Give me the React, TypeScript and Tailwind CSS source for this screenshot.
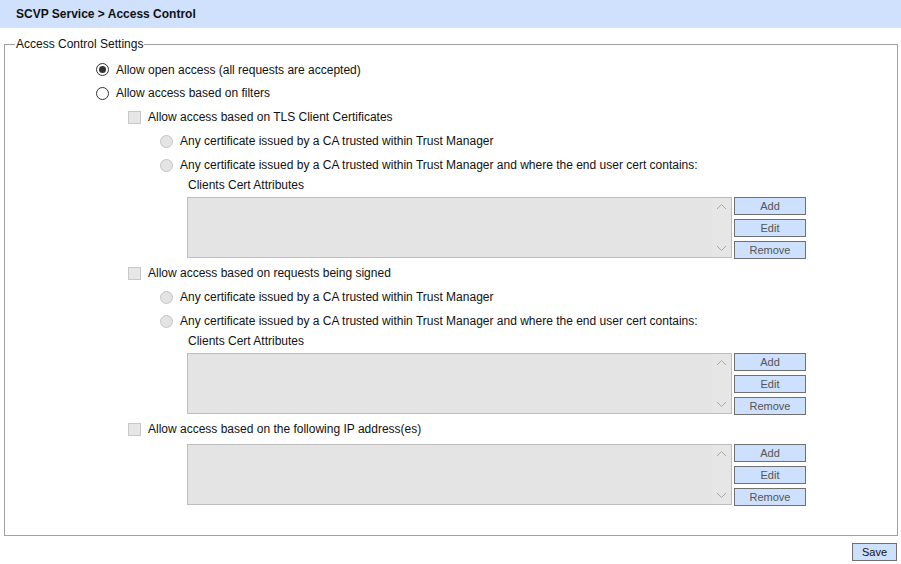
import React from "react";

const font = { fontFamily: '"Liberation Sans", Arial, sans-serif' };

function Radio({ checked, disabled }: { checked?: boolean; disabled?: boolean }) {
  if (disabled) {
    return <span className="block w-[13px] h-[13px] rounded-full border border-[#c4c4c4] bg-[#e4e4e4] shrink-0" />;
  }
  return (
    <span className="flex items-center justify-center w-[13px] h-[13px] rounded-full border border-[#333333] bg-white shrink-0">
      {checked && <span className="block w-[7px] h-[7px] rounded-full bg-[#333333]" />}
    </span>
  );
}

function Check() {
  return <span className="block w-[13px] h-[13px] border border-[#c8c8c8] bg-[#e6e6e6] shrink-0" />;
}

function Row({ children, label, first }: { children: React.ReactNode; label: string; first?: boolean }) {
  return (
    <div className={`flex items-center ${first ? "h-[23px]" : "h-6"} gap-[7px] text-[12px] text-[#111]`}>
      {children}
      <span>{label}</span>
    </div>
  );
}

function ListWithButtons() {
  return (
    <div className="flex ml-[91px] mt-1">
      <div className="relative w-[545px] h-[61px] border border-[#bdbdbd] bg-[#e4e4e4] flex">
        <div className="flex-1" />
        <div className="w-[19px] flex flex-col items-center justify-between py-[5px] bg-[#e6e6e6]">
          <svg width="11" height="7" viewBox="0 0 11 7" fill="none" stroke="#a8a8a8" strokeWidth="1">
            <path d="M1 6 L5.5 1.5 L10 6" />
          </svg>
          <svg width="11" height="7" viewBox="0 0 11 7" fill="none" stroke="#a8a8a8" strokeWidth="1">
            <path d="M1 1 L5.5 5.5 L10 1" />
          </svg>
        </div>
      </div>
      <div className="ml-[2px] flex flex-col gap-1">
        {["Add", "Edit", "Remove"].map((b) => (
          <div
            key={b}
            className="w-[72px] h-[18px] border border-[#707070] bg-[#cde0fd] flex items-center justify-center text-[11px] text-[#555]"
          >
            {b}
          </div>
        ))}
      </div>
    </div>
  );
}

export default function App() {
  return (
    <div className="w-[901px] h-[564px] bg-white" style={font}>
      <div className="h-7 bg-[#cfe1fc] flex items-center pl-4 text-[12px] font-bold text-[#111]">
        SCVP Service &gt; Access Control
      </div>
      <div className="relative mt-4 ml-1 mr-[3px] border border-[#a0a0a0] pt-[13px] pb-[29px] pl-[91px]">
        <span className="absolute left-[10px] top-[-9px] bg-white px-[1px] text-[12px] text-[#111] leading-4">
          Access Control Settings
        </span>
        <Row label="Allow open access (all requests are accepted)" first>
          <Radio checked />
        </Row>
        <Row label="Allow access based on filters">
          <Radio />
        </Row>
        <div className="pl-8">
          <Row label="Allow access based on TLS Client Certificates">
            <Check />
          </Row>
        </div>
        <div className="pl-16">
          <Row label="Any certificate issued by a CA trusted within Trust Manager">
            <Radio disabled />
          </Row>
          <Row label="Any certificate issued by a CA trusted within Trust Manager and where the end user cert contains:">
            <Radio disabled />
          </Row>
        </div>
        <div className="ml-[92px] h-4 flex items-center text-[12px] text-[#111]">Clients Cert Attributes</div>
        <ListWithButtons />

        <div className="pl-8 mt-[2px]">
          <Row label="Allow access based on requests being signed">
            <Check />
          </Row>
        </div>
        <div className="pl-16">
          <Row label="Any certificate issued by a CA trusted within Trust Manager">
            <Radio disabled />
          </Row>
          <Row label="Any certificate issued by a CA trusted within Trust Manager and where the end user cert contains:">
            <Radio disabled />
          </Row>
        </div>
        <div className="ml-[92px] h-4 flex items-center text-[12px] text-[#111]">Clients Cert Attributes</div>
        <ListWithButtons />

        <div className="pl-8 mt-[2px]">
          <Row label="Allow access based on the following IP address(es)">
            <Check />
          </Row>
        </div>
        <div className="-mt-[1px]">
          <ListWithButtons />
        </div>
      </div>
      <div className="flex justify-end mr-1 mt-[7px]">
        <div className="w-[45px] h-[18px] border border-[#707070] bg-[#cde0fd] flex items-center justify-center text-[11px] text-[#111]">
          Save
        </div>
      </div>
    </div>
  );
}
